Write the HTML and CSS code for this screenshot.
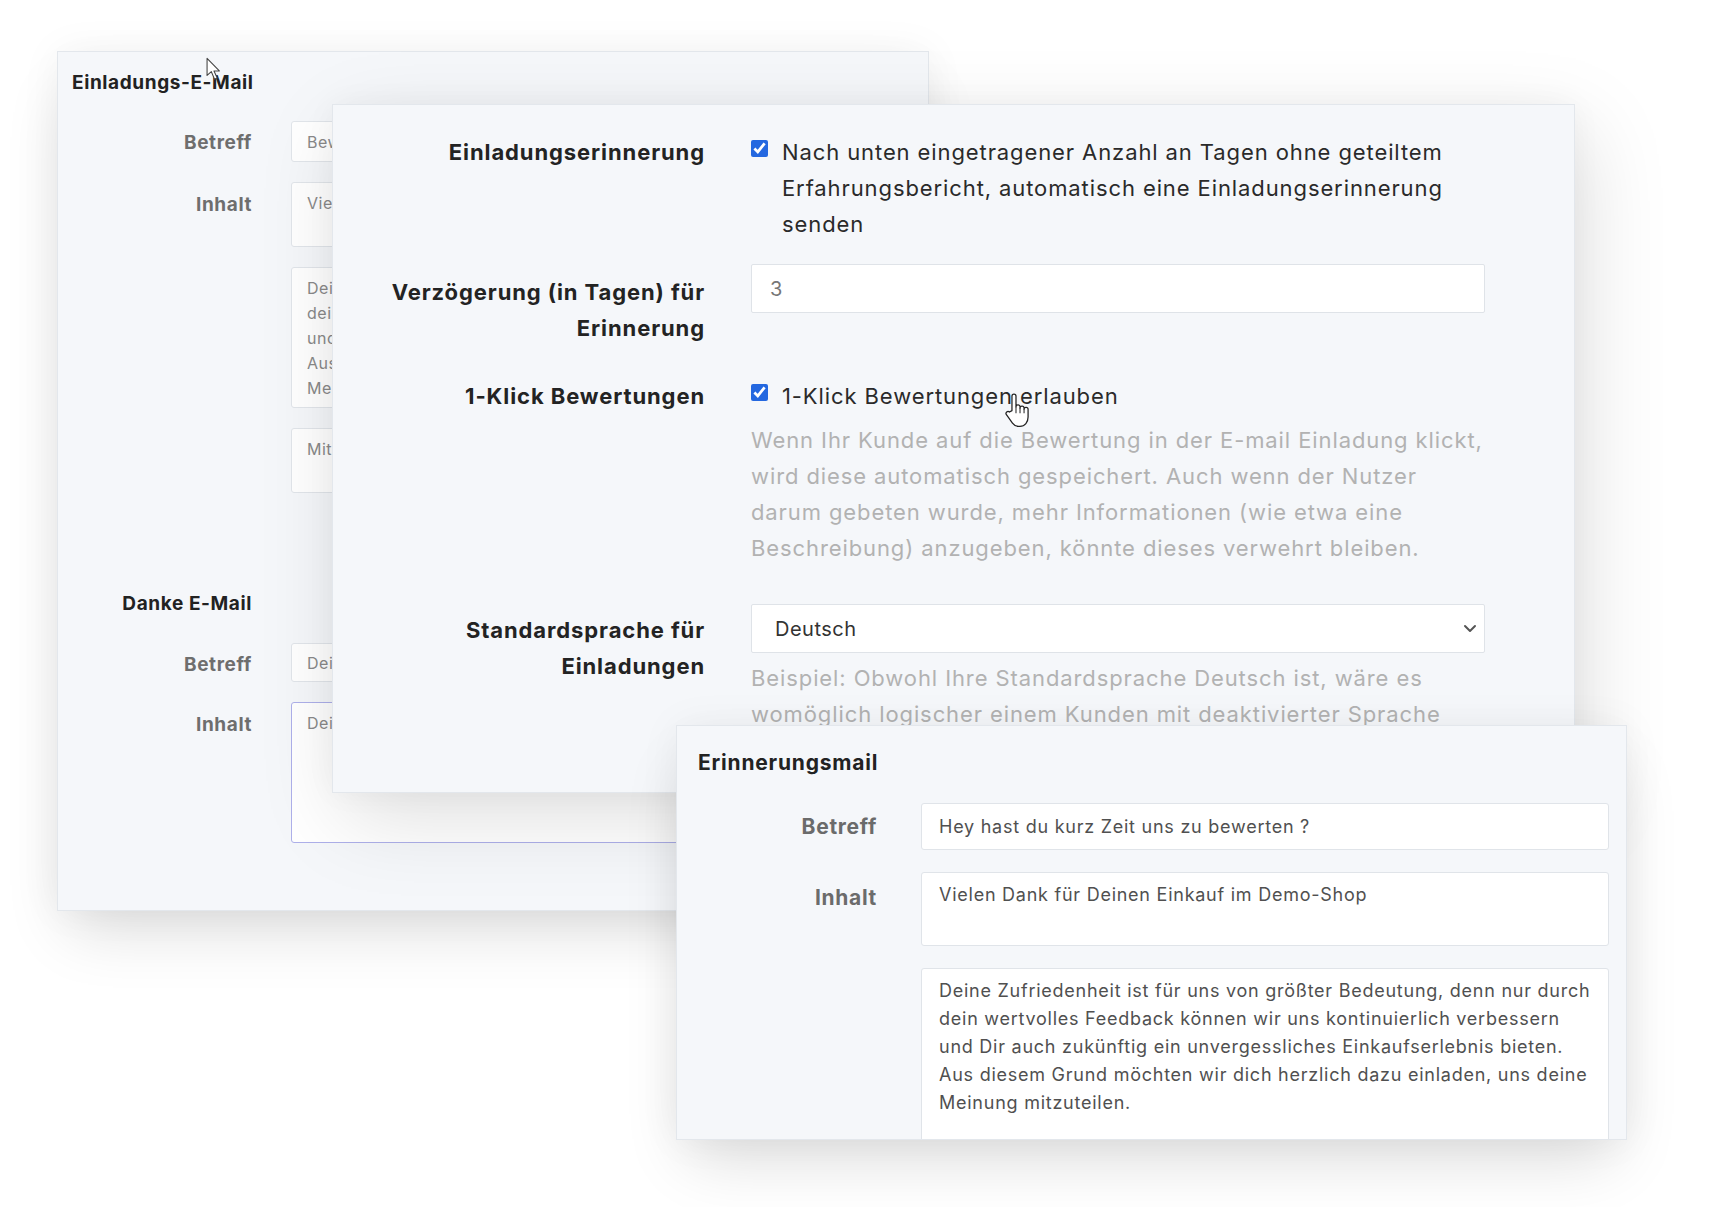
FILE: index.html
```html
<!DOCTYPE html>
<html lang="de">
<head>
    <meta charset="UTF-8">
    <title>Einladungen – Einstellungen</title>
    <link rel="stylesheet" href="styles.css">
</head>
<body>
<div class="desk">

    <!-- Einladungs-E-Mail (hinten) -->
    <section class="window window-back">
        <h2 class="window-title">Einladungs-E-Mail</h2>
        <div class="fields">
            <div class="field">
                <label class="field-label">Betreff</label>
                <input class="field-input" type="text" value="Bewerte deinen Einkauf im Demo-Shop">
            </div>
            <div class="field">
                <label class="field-label label-area">Inhalt</label>
                <textarea class="field-input area-sm" wrap="off">Vielen Dank für Deinen Einkauf im Demo-Shop</textarea>
            </div>
            <div class="field">
                <span></span>
                <textarea class="field-input area-lg" wrap="off">Deine Zufriedenheit ist für uns von größter Bedeutung, denn nur durch
dein wertvolles Feedback können wir uns kontinuierlich verbessern
und Dir auch zukünftig ein unvergessliches Einkaufserlebnis bieten.
Aus diesem Grund möchten wir dich herzlich dazu einladen, uns deine
Meinung mitzuteilen.</textarea>
            </div>
            <div class="field">
                <span></span>
                <textarea class="field-input area-sm" wrap="off">Mit freundlichen Grüßen, Dein Demo-Shop Team</textarea>
            </div>
            <div class="field field-heading">
                <h3 class="sub-title">Danke E-Mail</h3>
            </div>
            <div class="field">
                <label class="field-label">Betreff</label>
                <input class="field-input input-sm" type="text" value="Deine Bewertung ist angekommen">
            </div>
            <div class="field">
                <label class="field-label label-area">Inhalt</label>
                <textarea class="field-input area-lg is-focus" wrap="off">Deine Bewertung ist bei uns eingegangen. Vielen Dank!</textarea>
            </div>
        </div>
    </section>

    <!-- Erinnerungen (mitte) -->
    <section class="window window-main">
        <div class="row">
            <label class="row-label">Einladungserinnerung</label>
            <div class="check">
                <input type="checkbox" checked>
                <span>Nach unten eingetragener Anzahl an Tagen ohne geteiltem Erfahrungsbericht, automatisch eine Einladungserinnerung senden</span>
            </div>
        </div>
        <div class="row">
            <label class="row-label label-boxed">Verzögerung (in Tagen) für Erinnerung</label>
            <div>
                <input class="row-input" type="text" value="3">
            </div>
        </div>
        <div class="row row-spaced">
            <label class="row-label">1-Klick Bewertungen</label>
            <div>
                <div class="check">
                    <input type="checkbox" checked>
                    <span>1-Klick Bewertungen erlauben</span>
                </div>
                <p class="help">Wenn Ihr Kunde auf die Bewertung in der E-mail Einladung klickt,<br>wird diese automatisch gespeichert. Auch wenn der Nutzer<br>darum gebeten wurde, mehr Informationen (wie etwa eine<br>Beschreibung) anzugeben, könnte dieses verwehrt bleiben.</p>
            </div>
        </div>
        <div class="row row-wide">
            <label class="row-label label-select">Standardsprache für Einladungen</label>
            <div>
                <div class="select-wrap">
                    <select class="row-input row-select">
                        <option>Deutsch</option>
                        <option>English</option>
                        <option>Français</option>
                    </select>
                    <svg class="chevron" width="14" height="9" viewBox="0 0 14 9"><path d="M2 2 L7 7 L12 2" fill="none" stroke="#555" stroke-width="2" stroke-linecap="round" stroke-linejoin="round"/></svg>
                </div>
                <p class="help help-select">Beispiel: Obwohl Ihre Standardsprache Deutsch ist, wäre es<br>womöglich logischer einem Kunden mit deaktivierter Sprache</p>
            </div>
        </div>
    </section>

    <!-- Erinnerungsmail (vorne) -->
    <section class="window window-front">
        <h2 class="window-title front-title">Erinnerungsmail</h2>
        <div class="front-fields">
            <div class="front-field">
                <label class="front-label">Betreff</label>
                <input class="front-input" type="text" value="Hey hast du kurz Zeit uns zu bewerten ?">
            </div>
            <div class="front-field">
                <label class="front-label label-area-front">Inhalt</label>
                <textarea class="front-input front-area-sm" wrap="off">Vielen Dank für Deinen Einkauf im Demo-Shop</textarea>
            </div>
            <div class="front-field">
                <span></span>
                <textarea class="front-input front-area-lg" wrap="off">Deine Zufriedenheit ist für uns von größter Bedeutung, denn nur durch
dein wertvolles Feedback können wir uns kontinuierlich verbessern
und Dir auch zukünftig ein unvergessliches Einkaufserlebnis bieten.
Aus diesem Grund möchten wir dich herzlich dazu einladen, uns deine
Meinung mitzuteilen.</textarea>
            </div>
        </div>
    </section>

    <!-- Mauszeiger -->
    <svg class="cursor cursor-arrow" width="16" height="24" viewBox="0 0 15 22">
        <path d="M1 1 L1 17 L5 13.5 L8 20.5 L10.5 19.5 L7.5 12.8 L12.5 12.8 Z" fill="#fff" stroke="#444" stroke-width="1" stroke-linejoin="round"/>
    </svg>
    <svg class="cursor cursor-hand" width="24" height="34" viewBox="2.5 1 19 27">
        <path d="M8 15 V3.5 a1.6 1.6 0 0 1 3.2 0 V12 a1.6 1.6 0 0 1 3.2 0 V13 a1.6 1.6 0 0 1 3.2 0 V14 a1.6 1.6 0 0 1 3.2 0 V20 c0 4 -2.5 7.5 -6.5 7.5 H13 c-2.2 0 -3.4 -1 -4.6 -2.6 L3.6 18.2 a1.6 1.6 0 0 1 2.4 -2.1 Z" fill="#fff" stroke="#222" stroke-width="1" stroke-linejoin="round"/>
        <path d="M11.2 12 V17 M14.4 13 V17 M17.6 14 V17" stroke="#222" stroke-width="0.8" fill="none"/>
    </svg>
</div>
</body>
</html>
```

FILE: styles.css
```css
* { box-sizing: border-box; }
body { margin: 0; background: #fff; font-family: Inter, "Noto Sans", "Liberation Sans", sans-serif; color: #252525; }
.desk { position: relative; width: 1734px; height: 1207px; overflow: hidden; }

/* Fenster */
.window { position: absolute; overflow: hidden; background: #f5f7fa; border: 1px solid #e3e7ec; box-shadow: 0 30px 60px -12px rgba(0,0,0,0.14), 0 0 40px rgba(0,0,0,0.05); }
.window-back { left: 57px; top: 51px; width: 872px; height: 860px; padding: 19px 40px 0 14px; z-index: 1; }
.window-main { left: 332px; top: 104px; width: 1243px; height: 689px; padding: 29px 89px 0 39px; z-index: 2; box-shadow: 10px 25px 80px rgba(0,0,0,0.13), 0 0 30px rgba(0,0,0,0.04); }
.window-front { left: 676px; top: 725px; width: 951px; height: 415px; padding: 24px 17px 0 21px; z-index: 3; }
.window-title { margin: 0; font-size: 19px; line-height: 24px; font-weight: 700; letter-spacing: 0.6px; color: #222; }

/* Einladungs-E-Mail */
.fields { margin-top: 26px; }
.field { display: grid; grid-template-columns: 180px 1fr; column-gap: 39px; margin-bottom: 20px; }
.field-label { text-align: right; font-size: 19px; line-height: 24px; font-weight: 700; letter-spacing: 0.6px; color: #6e6e6e; padding-top: 10px; }
.label-area { padding-top: 11px; }
.field-input { display: block; width: 100%; height: 41px; margin: 0; padding: 8px 15px; border: 1px solid #e1e5ea; border-radius: 3px; background: #fff; font: 16px/25px Inter, sans-serif; letter-spacing: 0.5px; color: #8a8a8a; resize: none; overflow: hidden; outline: none; }
.input-sm { height: 39px; }
.area-sm { height: 65px; }
.area-lg { height: 141px; }
.is-focus { border-color: #aeb0ea; }
.field-heading { margin-top: 99px; margin-bottom: 27px; }
.sub-title { grid-column: 1; margin: 0; text-align: right; font-size: 19px; line-height: 24px; font-weight: 700; letter-spacing: 0.6px; color: #222; }

/* Erinnerungen */
.row { display: grid; grid-template-columns: 333px 1fr; column-gap: 46px; font-size: 22px; line-height: 36px; letter-spacing: 0.9px; }
.row + .row { margin-top: 22px; }
.row-spaced { margin-top: 32px !important; }
.row-wide { margin-top: 38px !important; }
.row-label { text-align: right; font-weight: 700; color: #232323; }
.label-boxed { padding-top: 10px; }
.label-select { padding-top: 8px; }
.check { display: flex; align-items: flex-start; gap: 14px; color: #2a2a2a; }
.check input { flex: none; width: 17px; height: 17px; margin: 6px 0 0; accent-color: #2468e0; }
.row-input { display: block; width: 100%; height: 49px; margin: 0; padding: 0 18px; border: 1px solid #dfe3e8; border-radius: 2px; background: #fff; font: 20px Inter, sans-serif; letter-spacing: 0.5px; color: #777; outline: none; }
.select-wrap { position: relative; }
.row-select { height: 49px; padding-left: 23px; color: #333; appearance: none; -webkit-appearance: none; }
.chevron { position: absolute; right: 8px; top: 20px; }
.help { margin: 8px 0 0; white-space: nowrap; color: #b2b2b2; }
.help-select { margin-top: 7px; }

/* Erinnerungsmail */
.front-title { font-size: 21px; line-height: 26px; letter-spacing: 0.8px; }
.front-fields { margin-top: 27px; }
.front-field { display: grid; grid-template-columns: 179px 1fr; column-gap: 44px; margin-bottom: 22px; }
.front-label { text-align: right; font-size: 21px; line-height: 24px; font-weight: 700; letter-spacing: 0.7px; color: #6b6b6b; padding-top: 12px; }
.label-area-front { padding-top: 14px; }
.front-input { display: block; width: 100%; height: 47px; margin: 0; padding: 8px 17px; border: 1px solid #e0e4e9; border-radius: 3px; background: #fff; font: 18px/28px Inter, sans-serif; letter-spacing: 0.75px; color: #505050; resize: none; overflow: hidden; outline: none; }
.front-area-sm { height: 74px; }
.front-area-lg { height: 200px; padding-top: 8px; }

/* Mauszeiger */
.cursor { position: absolute; z-index: 10; }
.cursor-arrow { left: 206px; top: 57px; }
.cursor-hand { left: 1005px; top: 393px; }
```
